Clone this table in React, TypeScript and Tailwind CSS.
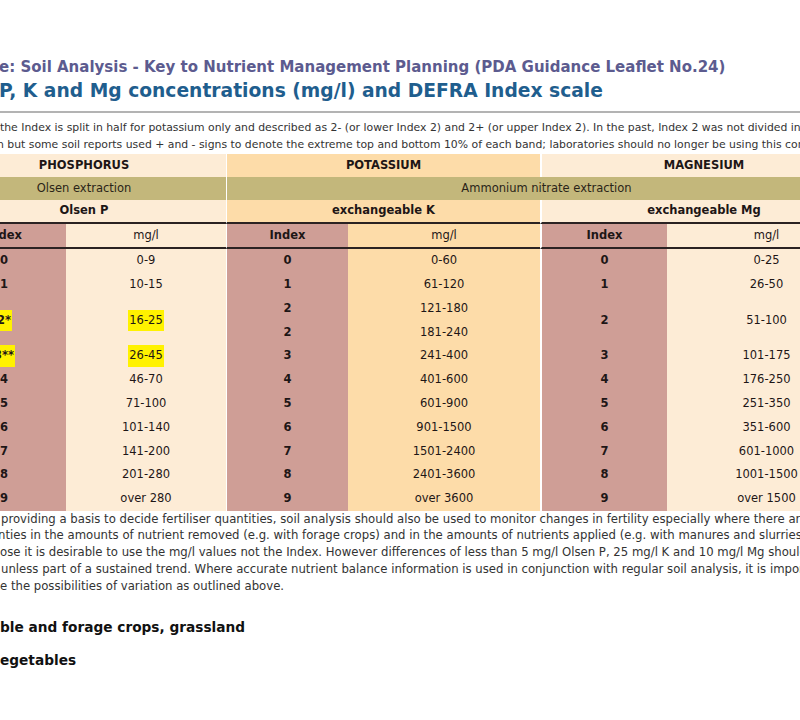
import React from "react";

const font = { fontFamily: '"DejaVu Sans", Verdana, sans-serif' };

type Cell = {
  c: number;
  r: number;
  span?: number;
  text: string;
  hl?: boolean;
  bold?: boolean;
};

const RED = "bg-[#cf9e96]";
const CREAM = "bg-[#fdecd6]";
const ORANGE = "bg-[#fddca9]";

function colBg(c: number) {
  if (c === 1 || c === 3 || c === 5) return RED;
  if (c === 4) return ORANGE;
  return CREAM;
}

function colBorder(c: number) {
  if (c === 3) return "border-l border-white";
  if (c === 5) return "border-l-2 border-white";
  return "";
}

const colStart = ["", "col-start-1", "col-start-2", "col-start-3", "col-start-4", "col-start-5", "col-start-6"];
const rowStart = [
  "", "row-start-1", "row-start-2", "row-start-3", "row-start-4", "row-start-5", "row-start-6", "row-start-7",
  "row-start-8", "row-start-9", "row-start-10", "row-start-11", "row-start-12", "row-start-13", "row-start-14", "row-start-15",
];

export default function App() {
  const P = [
    { r: 5, t: "0", m: "0-9" },
    { r: 6, t: "1", m: "10-15" },
    { r: 7, t: "2*", m: "16-25", span: 2, hl: true },
    { r: 9, t: "3**", m: "26-45", hl: true },
    { r: 10, t: "4", m: "46-70" },
    { r: 11, t: "5", m: "71-100" },
    { r: 12, t: "6", m: "101-140" },
    { r: 13, t: "7", m: "141-200" },
    { r: 14, t: "8", m: "201-280" },
    { r: 15, t: "9", m: "over 280" },
  ];
  const K = [
    { r: 5, t: "0", m: "0-60" },
    { r: 6, t: "1", m: "61-120" },
    { r: 7, t: "2", m: "121-180" },
    { r: 8, t: "2", m: "181-240" },
    { r: 9, t: "3", m: "241-400" },
    { r: 10, t: "4", m: "401-600" },
    { r: 11, t: "5", m: "601-900" },
    { r: 12, t: "6", m: "901-1500" },
    { r: 13, t: "7", m: "1501-2400" },
    { r: 14, t: "8", m: "2401-3600" },
    { r: 15, t: "9", m: "over 3600" },
  ];
  const M = [
    { r: 5, t: "0", m: "0-25" },
    { r: 6, t: "1", m: "26-50" },
    { r: 7, t: "2", m: "51-100", span: 2 },
    { r: 9, t: "3", m: "101-175" },
    { r: 10, t: "4", m: "176-250" },
    { r: 11, t: "5", m: "251-350" },
    { r: 12, t: "6", m: "351-600" },
    { r: 13, t: "7", m: "601-1000" },
    { r: 14, t: "8", m: "1001-1500" },
    { r: 15, t: "9", m: "over 1500" },
  ];

  const cells: Cell[] = [];
  const push = (arr: { r: number; t: string; m: string; span?: number; hl?: boolean }[], ic: number) => {
    arr.forEach((x) => {
      cells.push({ c: ic, r: x.r, span: x.span, text: x.t, bold: true, hl: x.hl });
      cells.push({ c: ic + 1, r: x.r, span: x.span, text: x.m, hl: x.hl });
    });
  };
  push(P, 1);
  push(K, 3);
  push(M, 5);

  return (
    <div className="w-[800px] h-[720px] overflow-hidden bg-white text-[#222]" style={font}>
      <div className="pt-[57px]">
        <div className="whitespace-nowrap text-[15px] font-bold leading-[20px] text-[#5c5b8f] ml-[-1px]">
          e: Soil Analysis - Key to Nutrient Management Planning (PDA Guidance Leaflet No.24)
        </div>
        <div className="whitespace-nowrap text-[18.7px] font-bold leading-[26px] text-[#1f5e8e] mt-[1px] ml-[-1px]">
          P, K and Mg concentrations (mg/l) and DEFRA Index scale
        </div>
        <div className="mt-[7px] h-[2px] w-full bg-[#b3b3b3]" />
        <div className="mt-[6px] text-[10.85px] leading-[17px] text-[#333] whitespace-nowrap">
          <div>the Index is split in half for potassium only and described as 2- (or lower Index 2) and 2+ (or upper Index 2). In the past, Index 2 was not divided in half</div>
          <div className="ml-[-3px]">n but some soil reports used + and - signs to denote the extreme top and bottom 10% of each band; laboratories should no longer be using this convention.</div>
        </div>

        <div className="ml-[-58px] w-[924px] mt-[1px]">
          <div className="grid grid-cols-[124px_160px_122px_192px_127px_199px] grid-rows-[23px_23px_24px_25px_repeat(11,23.8px)] text-[11.5px] text-[#1e1616]">
            <div className={`col-start-1 col-span-2 row-start-1 ${CREAM} flex items-center justify-center font-bold`}>PHOSPHORUS</div>
            <div className={`col-start-3 col-span-2 row-start-1 ${ORANGE} border-l border-white flex items-center justify-center font-bold`}>POTASSIUM</div>
            <div className={`col-start-5 col-span-2 row-start-1 ${CREAM} border-l-2 border-white flex items-center justify-center font-bold`}>MAGNESIUM</div>
            <div className="col-start-1 col-span-2 row-start-2 bg-[#c3b77b] flex items-center justify-center text-[#2a2418]">Olsen extraction</div>
            <div className="col-start-3 col-span-4 row-start-2 bg-[#c3b77b] border-l border-white flex items-center justify-center text-[#2a2418]">Ammonium nitrate extraction</div>
            <div className={`col-start-1 col-span-2 row-start-3 ${CREAM} border-b-2 border-[#2b2222] flex items-center justify-center font-bold`}>Olsen P</div>
            <div className={`col-start-3 col-span-2 row-start-3 ${ORANGE} border-l border-l-white border-b-2 border-b-[#2b2222] flex items-center justify-center font-bold`}>exchangeable K</div>
            <div className={`col-start-5 col-span-2 row-start-3 ${CREAM} border-l-2 border-l-white border-b-2 border-b-[#2b2222] flex items-center justify-center font-bold`}>exchangeable Mg</div>
            {[1, 2, 3, 4, 5, 6].map((c) => (
              <div
                key={"h" + c}
                className={`${colStart[c]} row-start-4 ${colBg(c)} ${c === 3 ? "border-l border-l-white" : c === 5 ? "border-l-2 border-l-white" : ""} border-b-2 border-b-[#2b2222] flex items-center justify-center ${c % 2 === 1 ? "font-bold" : ""}`}
              >
                {c % 2 === 1 ? "Index" : "mg/l"}
              </div>
            ))}
            {cells.map((x, i) => (
              <div
                key={i}
                className={`${colStart[x.c]} ${rowStart[x.r]} ${x.span === 2 ? "row-span-2" : ""} ${colBg(x.c)} ${colBorder(x.c)} flex items-center justify-center ${x.bold ? "font-bold" : ""}`}
              >
                <span className={x.hl ? "bg-[#fff200] px-[1px] py-[2px]" : ""}>{x.text}</span>
              </div>
            ))}
          </div>
        </div>

        <div className="mt-[0px] text-[11.7px] leading-[16.7px] text-[#333] whitespace-nowrap">
          <div className="ml-[1px]">providing a basis to decide fertiliser quantities, soil analysis should also be used to monitor changes in fertility especially where there are</div>
          <div className="ml-[-2px]">nties in the amounts of nutrient removed (e.g. with forage crops) and in the amounts of nutrients applied (e.g. with manures and slurries</div>
          <div>ose it is desirable to use the mg/l values not the Index. However differences of less than 5 mg/l Olsen P, 25 mg/l K and 10 mg/l Mg should</div>
          <div className="ml-[1px]">unless part of a sustained trend. Where accurate nutrient balance information is used in conjunction with regular soil analysis, it is important</div>
          <div>e the possibilities of variation as outlined above.</div>
        </div>

        <div className="mt-[23px] text-[13.7px] font-bold leading-[20px] text-[#111] whitespace-nowrap">ble and forage crops, grassland</div>
        <div className="mt-[13px] text-[13.7px] font-bold leading-[20px] text-[#111] whitespace-nowrap">egetables</div>
      </div>
    </div>
  );
}
